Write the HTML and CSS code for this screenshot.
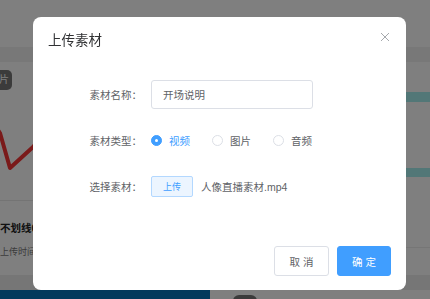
FILE: index.html
```html
<!DOCTYPE html>
<html>
  <head>
    <meta charset="utf-8" />
    <meta name="viewport" content="width=device-width, initial-scale=1.0" />
    <title>上传素材</title>
    <link rel="stylesheet" href="styles.css">
  </head>
  <body>
    <div class="page">
      <div class="topbar"></div>
      <div class="tabs"></div>
      <div class="main">
        <div class="card">
          <div class="thumb">
            <span class="tag">片</span>
            <svg class="chart" width="224" height="138" viewBox="0 0 224 138">
              <polyline points="0,50 14,71 24,106 47,85 90,40 140,70 224,20" />
            </svg>
          </div>
          <div class="meta">
            <p class="meta-title">不划线0:00</p>
            <p class="meta-time">上传时间：2023-06-12</p>
          </div>
        </div>
        <div class="side">
          <div class="bar"></div>
          <div class="bar"></div>
        </div>
      </div>
      <div class="band"></div>
      <div class="bottom">
        <div class="navy"></div>
        <div class="chip"></div>
      </div>
    </div>

    <div class="overlay">
      <div class="dialog">
        <div class="dialog-header">
          <span class="dialog-title">上传素材</span>
          <button class="dialog-close" type="button">
            <svg width="12" height="12" viewBox="0 0 12 12">
              <path d="M2 2 L10 10 M10 2 L2 10" />
            </svg>
          </button>
        </div>
        <div class="dialog-body">
          <form class="form">
            <div class="form-item">
              <label class="form-label">素材名称：</label>
              <input class="input" type="text" value="开场说明" />
            </div>
            <div class="form-item">
              <label class="form-label">素材类型：</label>
              <div class="radio-group">
                <span class="radio checked"><span class="radio-dot"></span>视频</span>
                <span class="radio"><span class="radio-dot"></span>图片</span>
                <span class="radio"><span class="radio-dot"></span>音频</span>
              </div>
            </div>
            <div class="form-item">
              <label class="form-label">选择素材：</label>
              <button class="upload-btn" type="button">上传</button>
              <span class="file-name">人像直播素材.mp4</span>
            </div>
          </form>
        </div>
        <div class="dialog-footer">
          <button class="btn" type="button">取 消</button>
          <button class="btn btn-primary" type="button">确 定</button>
        </div>
      </div>
    </div>
  </body>
</html>
```

FILE: styles.css
```css
html,
body {
  margin: 0;
  height: 100%;
  overflow: hidden;
}
body {
  font-family: "Liberation Sans", "Noto Sans CJK SC", sans-serif;
  background: #fff;
}

/* page behind the mask */
.page {
  width: 430px;
}
.topbar {
  height: 47px;
  background: #fff;
}
.tabs {
  height: 15px;
  background: #f1f1f1;
}
.main {
  display: flex;
  height: 213px;
}
.card {
  width: 224px;
  margin-left: -14px;
}
.thumb {
  position: relative;
  height: 138px;
  border-bottom: 1px solid #e8e8e8;
}
.tag {
  position: absolute;
  top: 8px;
  left: 0;
  width: 26px;
  height: 20px;
  box-sizing: border-box;
  padding-right: 3px;
  line-height: 20px;
  border-radius: 5px;
  background: #777;
  color: #fff;
  font-size: 10px;
  text-align: right;
}
.chart polyline {
  fill: none;
  stroke: #f43434;
  stroke-width: 4;
  stroke-linejoin: round;
}
.meta {
  padding: 21px 0 0 14px;
}
.meta p {
  margin: 0;
  white-space: nowrap;
}
.meta-title {
  font-size: 10.5px;
  line-height: 13px;
  font-weight: bold;
  color: #222;
}
.meta-time {
  margin-top: 12px !important;
  font-size: 9px;
  line-height: 11px;
  color: #777;
}
.side {
  flex: 1;
  padding-top: 30px;
  border-bottom: 1px solid #ececec;
  height: 155px;
}
.bar {
  height: 10px;
  margin-left: 120px;
  background: #a4eeee;
}
.bar + .bar {
  margin-top: 66px;
  height: 9px;
}
.band {
  height: 15px;
  background: #ededed;
}
.bottom {
  display: flex;
  height: 9px;
  overflow: hidden;
}
.navy {
  width: 210px;
  background: #0474b8;
}
.chip {
  width: 24px;
  height: 20px;
  margin: 5px 0 0 23px;
  border-radius: 6px;
  background: #777;
}

/* dialog */
.overlay {
  position: fixed;
  top: 0;
  left: 0;
  right: 0;
  bottom: 0;
  background: rgba(0, 0, 0, 0.5);
}
.dialog {
  width: 373px;
  margin: 17px 0 0 33px;
  background: #fff;
  border-radius: 8px;
}
.dialog-header {
  position: relative;
  padding: 15px 15px 7px;
}
.dialog-title {
  display: block;
  font-size: 13.5px;
  line-height: 18px;
  color: #303133;
}
.dialog-close {
  position: absolute;
  top: 14px;
  right: 15px;
  width: 12px;
  height: 12px;
  padding: 0;
  border: none;
  background: none;
}
.dialog-close svg {
  display: block;
}
.dialog-close path {
  stroke: #a6a9ad;
  stroke-width: 1;
  fill: none;
}
.dialog-body {
  padding: 23px 15px 21px;
}
.form-item {
  display: flex;
  align-items: center;
  height: 29px;
  margin-bottom: 17px;
}
.form-label {
  width: 103px;
  box-sizing: border-box;
  padding-right: 9px;
  text-align: right;
  font-size: 10.5px;
  color: #606266;
}
.input {
  width: 162px;
  height: 29px;
  box-sizing: border-box;
  padding: 0 11px;
  border: 1px solid #dcdfe6;
  border-radius: 3px;
  font-family: inherit;
  font-size: 10.5px;
  color: #606266;
  outline: none;
}
.radio-group {
  display: flex;
  align-items: center;
}
.radio {
  display: flex;
  align-items: center;
  margin-right: 22px;
  font-size: 10.5px;
  color: #606266;
}
.radio-dot {
  display: flex;
  align-items: center;
  justify-content: center;
  width: 11px;
  height: 11px;
  box-sizing: border-box;
  margin-right: 7px;
  border: 1px solid #dcdfe6;
  border-radius: 50%;
}
.radio.checked {
  color: #409eff;
}
.radio.checked .radio-dot {
  background: #409eff;
  border-color: #409eff;
}
.radio.checked .radio-dot:after {
  content: "";
  width: 3.5px;
  height: 3.5px;
  border-radius: 50%;
  background: #fff;
}
.upload-btn {
  height: 21px;
  padding: 0 11px;
  border: 1px solid #b3d8ff;
  border-radius: 2px;
  background: #ecf5ff;
  color: #409eff;
  font-family: inherit;
  font-size: 9px;
}
.file-name {
  margin-left: 8px;
  font-size: 10.5px;
  color: #606266;
}
.dialog-footer {
  display: flex;
  justify-content: flex-end;
  gap: 8px;
  padding: 7px 15px 14px;
}
.btn {
  width: 55px;
  height: 30px;
  padding: 0;
  border: 1px solid #dcdfe6;
  border-radius: 3px;
  background: #fff;
  color: #606266;
  font-family: inherit;
  font-size: 10.5px;
}
.btn-primary {
  width: 54px;
  border-color: #409eff;
  background: #409eff;
  color: #fff;
}
```
